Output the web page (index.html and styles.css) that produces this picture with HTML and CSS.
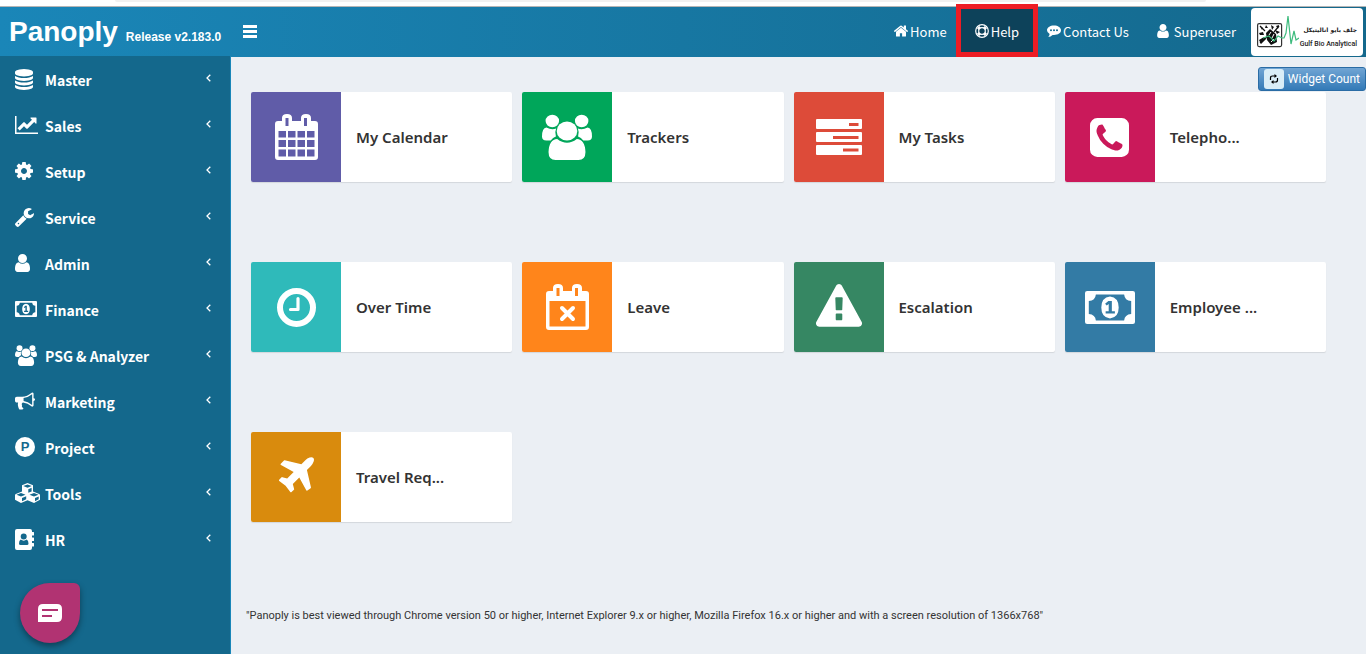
FILE: index.html
```html
<!DOCTYPE html>
<html lang="en">
<head>
  <meta charset="UTF-8">
  <meta name="viewport" content="width=device-width, initial-scale=1.0">
  <title>Panoply</title>
  <link rel="stylesheet" href="styles.css">
</head>
<body>
  <!-- Shared icons -->
  <svg class="sprite" aria-hidden="true">
    <symbol id="user" viewBox="256 128 1280 1536">
      <path d="M1536 1399q0 109-62.5 187t-150.5 78h-854q-88 0-150.5-78t-62.5-187q0-85 8.5-160.5t31.5-152 58.5-131 94-89 134.5-34.5q131 128 313 128t313-128q76 0 134.5 34.5t94 89 58.5 131 31.5 152 8.5 160.5zm-256-887q0 159-112.5 271.5t-271.5 112.5-271.5-112.5-112.5-271.5 112.5-271.5 271.5-112.5 271.5 112.5 112.5 271.5z"/>
    </symbol>
    <symbol id="users" viewBox="0 0 46 46" preserveAspectRatio="none">
      <circle cx="9.500" cy="7" r="6.200"/>
      <circle cx="36.500" cy="7" r="6.200"/>
      <path d="M4 13.500Q9 16.500 13 14.500Q11.500 18 12.800 22.500Q10 23.500 8 26.500H4Q0 26.500 0 22.500Q0 14 4 13.500zM42 13.500Q37 16.500 33 14.500Q34.500 18 33.200 22.500Q36 23.500 38 26.500H42Q46 26.500 46 22.500Q46 14 42 13.500z"/>
      <circle cx="23" cy="17" r="9.500"/>
      <path d="M14 25Q23 32.500 32 25Q39.500 25.500 40 38Q40 46 33.500 46H12.500Q6 46 6 38Q6.500 25.500 14 25z"/>
    </symbol>
    <symbol id="money" viewBox="0 0 46 33" preserveAspectRatio="none">
      <path fill-rule="evenodd" d="M2 0H44Q46 0 46 2V31Q46 33 44 33H2Q0 33 0 31V2Q0 0 2 0zM10 3.500Q9.500 9.500 3.500 10V23Q9.500 23.500 10 29.500H36Q36.500 23.500 42.500 23V10Q36.500 9.500 36 3.500zM23 5.500Q31 6.500 31 16.500Q31 26.500 23 27.500Q15 26.500 15 16.500Q15 6.500 23 5.500zM21.500 10L18.500 12.800L20 14.500L21.800 13V20.200H19V22.600H27.500V20.200H24.700V10z"/>
    </symbol>
    <symbol id="angle" viewBox="0 0 5 8">
      <path d="M4.300 .7L1 4L4.300 7.300" fill="none" stroke="currentColor" stroke-width="1.300"/>
    </symbol>
  </svg>

  <div class="window-edge"></div>

  <header class="header">
    <div class="brand">
      <span class="brand-name">Panoply</span>
      <span class="brand-release">Release v2.183.0</span>
    </div>
    <button class="menu-toggle" type="button" aria-label="Toggle menu">
      <span></span><span></span><span></span>
    </button>
    <nav class="top-nav">
      <a class="nav-link" href="#">
        <svg class="nav-icon" viewBox="90 250 1612 1290"><path d="M1472 992v480q0 26-19 45t-45 19h-384v-384h-256v384h-384q-26 0-45-19t-19-45v-480q0-1 .5-3t.5-3l575-474 575 474q1 2 1 6zm223-69l-62 74q-8 9-21 11h-3q-13 0-21-7l-692-577-692 577q-12 8-24 7-13-2-21-11l-62-74q-8-10-7-23.500t11-21.500l719-599q32-26 76-26t76 26l244 204v-195q0-14 9-23t23-9h192q14 0 23 9t9 23v408l219 182q10 8 11 21.500t-7 23.500z"/></svg>
        Home
      </a>
      <a class="nav-link active" href="#">
        <svg class="nav-icon" viewBox="0 0 14 14">
          <circle cx="7" cy="7" r="6.300" fill="none" stroke="currentColor" stroke-width="1.200"/>
          <circle cx="7" cy="7" r="3.300" fill="none" stroke="currentColor" stroke-width="1.200"/>
          <path d="M2 4.200L4.200 2L6 3.800L3.800 6zM12 4.200L9.800 2L8 3.800L10.200 6zM2 9.800L4.200 12L6 10.200L3.800 8zM12 9.800L9.800 12L8 10.200L10.200 8z"/>
        </svg>
        Help
      </a>
      <a class="nav-link" href="#">
        <svg class="nav-icon" viewBox="0 0 14 12">
          <path fill-rule="evenodd" d="M7 .5C11 .5 14 2.600 14 5.300S11 10 7 10Q6.300 10 5.600 9.900Q3.600 11.700 1.300 11.900Q2.500 10.700 2.600 9Q0 7.600 0 5.300C0 2.600 3 .5 7 .5zM3 5.300a1 1 0 1 0 2 0a1 1 0 1 0-2 0zM6 5.300a1 1 0 1 0 2 0a1 1 0 1 0-2 0zM9 5.300a1 1 0 1 0 2 0a1 1 0 1 0-2 0z"/>
        </svg>
        Contact Us
      </a>
      <a class="nav-link nav-user" href="#">
        <svg class="nav-icon"><use href="#user"/></svg>
        Superuser
      </a>
      <a class="company" href="#">
        <svg class="company-mark" viewBox="0 0 42 36">
          <rect x=".6" y="9.600" width="24" height="23" rx="1.500" fill="#fff" stroke="#333" stroke-width="1.200"/>
          <path d="M9 19L13 15L19 20L20 28L14 31L10 26zM3 12L6 14L5 16zM9 11L11 14L8 14zM14 11L17 13L15 16zM19 12L22 11L21 15zM2 19L6 18L7 21L3 21zM2 26L7 23L9 25L4 30zM18 16L23 18L20 20z" fill="#111"/>
          <path d="M3 12L8 17M22 12L17 18M3 29L11 22" stroke="#111" stroke-width="1.200"/>
          <path d="M12 21L14 18M15 24L17 20M14 28L17 25" stroke="#fff"/>
          <path d="M6 24L12 22L17 27L21 22L25 24H27L29 19L31 2L34 30L37 17L39 26L42 24" fill="none" stroke="#3dbb7d" stroke-width="1.200"/>
        </svg>
        <span class="company-name">
          <span class="company-ar" lang="ar" dir="rtl">جلف بايو اناليتيكل</span>
          <span class="company-en">Gulf Bio Analytical</span>
        </span>
      </a>
    </nav>
  </header>

  <div class="layout">
    <aside class="sidebar">
      <ul class="menu">
        <li><a class="menu-link" href="#">
          <span class="menu-icon"><svg width="18" height="21" viewBox="128 0 1536 1792"><path d="M896 768q237 0 443-43t325-127v170q0 69-103 128t-280 93.500-385 34.500-385-34.500-280-93.500-103-128v-170q119 84 325 127t443 43zm0 768q237 0 443-43t325-127v170q0 69-103 128t-280 93.500-385 34.500-385-34.500-280-93.500-103-128v-170q119 84 325 127t443 43zm0-384q237 0 443-43t325-127v170q0 69-103 128t-280 93.500-385 34.500-385-34.500-280-93.500-103-128v-170q119 84 325 127t443 43zm0-1152q208 0 385 34.500t280 93.500 103 128v128q0 69-103 128t-280 93.500-385 34.500-385-34.500-280-93.500-103-128v-128q0-69 103-128t280-93.500 385-34.500z"/></svg></span>
          <span>Master</span>
          <svg class="angle"><use href="#angle"/></svg>
        </a></li>
        <li><a class="menu-link" href="#">
          <span class="menu-icon"><svg width="23" height="18" viewBox="0 0 23 18"><path d="M0 0H1.500V16.500H23V18H0zM21.500 2V7.200Q21.300 8 20.600 7.400L19.200 6L12.500 12.700Q12 13 11.500 12.700L9 10.200L4.700 14.500L2.500 12.300L8.500 6.300Q9 6 9.500 6.300L12 8.800L17 3.800L15.600 2.400Q15.100 1.700 15.900 1.500H21Q21.500 1.500 21.500 2z"/></svg></span>
          <span>Sales</span>
          <svg class="angle"><use href="#angle"/></svg>
        </a></li>
        <li><a class="menu-link" href="#">
          <span class="menu-icon"><svg width="18" height="18" viewBox="128 128 1536 1536"><path d="M1152 896q0-106-75-181t-181-75-181 75-75 181 75 181 181 75 181-75 75-181zm512-109v222q0 12-8 23t-20 13l-185 28q-19 54-39 91 35 50 107 138 10 12 10 25t-9 23q-27 37-99 108t-94 71q-12 0-26-9l-138-108q-44 23-91 38-16 136-29 186-7 28-36 28h-222q-14 0-24.500-8.500t-11.500-21.500l-28-184q-49-16-90-37l-141 107q-10 9-25 9-14 0-25-11-126-114-165-168-7-10-7-23 0-12 8-23 15-21 51-66.500t54-70.500q-27-50-41-99l-183-27q-13-2-21-12.500t-8-23.500v-222q0-12 8-23t19-13l186-28q14-46 39-92-40-57-107-138-10-12-10-24 0-10 9-23 26-36 98.500-107.500t94.500-71.500q13 0 26 10l138 107q44-23 91-38 16-136 29-186 7-28 36-28h222q14 0 24.500 8.500t11.500 21.500l28 184q49 16 90 37l142-107q9-9 24-9 13 0 25 10 129 119 165 170 7 8 7 22 0 12-8 23-15 21-51 66.500t-54 70.500q26 50 41 98l183 28q13 2 21 12.500t8 23.500z"/></svg></span>
          <span>Setup</span>
          <svg class="angle"><use href="#angle"/></svg>
        </a></li>
        <li><a class="menu-link" href="#">
          <span class="menu-icon"><svg width="19" height="19" viewBox="84 128 1643 1643"><path d="M448 1472q0-26-19-45t-45-19-45 19-19 45 19 45 45 19 45-19 19-45zm644-420l-682 682q-37 37-90 37-52 0-91-37l-106-108q-38-36-38-90 0-53 38-91l681-681q39 98 114.500 173.500t173.500 114.500zm634-435q0 39-23 106-47 134-164.500 217.500t-258.500 83.500q-185 0-316.500-131.500t-131.500-316.500 131.500-316.500 316.500-131.500q58 0 121.500 16.500t107.500 46.500q16 11 16 28t-16 28l-293 169v224l193 107q5-3 79-48.500t135.500-81 70.500-35.500q15 0 23.500 10t8.500 25z"/></svg></span>
          <span>Service</span>
          <svg class="angle"><use href="#angle"/></svg>
        </a></li>
        <li><a class="menu-link" href="#">
          <span class="menu-icon"><svg width="15" height="18"><use href="#user"/></svg></span>
          <span>Admin</span>
          <svg class="angle"><use href="#angle"/></svg>
        </a></li>
        <li><a class="menu-link" href="#">
          <span class="menu-icon"><svg width="22" height="16"><use href="#money"/></svg></span>
          <span>Finance</span>
          <svg class="angle"><use href="#angle"/></svg>
        </a></li>
        <li><a class="menu-link" href="#">
          <span class="menu-icon"><svg width="22" height="21"><use href="#users"/></svg></span>
          <span>PSG &amp; Analyzer</span>
          <svg class="angle"><use href="#angle"/></svg>
        </a></li>
        <li><a class="menu-link" href="#">
          <span class="menu-icon"><svg width="20" height="18" viewBox="0 128 1792 1536"><path d="M1664 640q53 0 90.500 37.500t37.500 90.500-37.500 90.500-90.500 37.500v384q0 52-38 90t-90 38q-417-347-812-380-58 19-91 66t-31 100.500 40 92.500q-20 33-23 65.500t6 58 33.500 55 48 50 61.500 50.500q-29 58-111.500 83t-168.500 11.500-132-55.500q-7-23-29.500-87.500t-32-94.500-23-89-15-101 3.500-98.500 22-110.500h-122q-66 0-113-47t-47-113v-192q0-66 47-113t113-47h480q435 0 896-384 52 0 90 38t38 90v384zm-128 604v-954q-394 302-768 343v270q377 42 768 341z"/></svg></span>
          <span>Marketing</span>
          <svg class="angle"><use href="#angle"/></svg>
        </a></li>
        <li><a class="menu-link" href="#">
          <span class="menu-icon"><span class="badge-p">P</span></span>
          <span>Project</span>
          <svg class="angle"><use href="#angle"/></svg>
        </a></li>
        <li><a class="menu-link" href="#">
          <span class="menu-icon"><svg width="25" height="20" viewBox="0 0 25 20"><path fill-rule="evenodd" d="M12.500 0L18 2.200V8.400L24.200 11Q25 11.400 25 12.200V16.800L19 20L12.500 17.300L6 20L0 16.800V12.200Q0 11.400.8 11L7 8.400V2.200zM8.300 3L12.500 4.800L16.700 3L12.500 1.400zM13.300 6.200V9.800L16.600 8.400V4.800zM1.500 11.800L6 13.600L10.500 11.800L6 10zM7 15V18.200L11.200 16.200V13.200zM14.500 11.800L19 13.600L23.500 11.800L19 10zM20 15V18.200L23.700 16.200V13.400z"/></svg></span>
          <span>Tools</span>
          <svg class="angle"><use href="#angle"/></svg>
        </a></li>
        <li><a class="menu-link" href="#">
          <span class="menu-icon"><svg width="19" height="21" viewBox="0 0 19 21"><path fill-rule="evenodd" d="M2 0H15Q17 0 17 2V3H18.500Q19 3 19 3.500V6Q19 6.500 18.500 6.500H17V8.500H18.500Q19 8.500 19 9V11.500Q19 12 18.500 12H17V14H18.500Q19 14 19 14.500V17Q19 17.500 18.500 17.500H17V19Q17 21 15 21H2Q0 21 0 19V2Q0 0 2 0zM5.700 7.500a3 3 0 1 0 6 0a3 3 0 1 0-6 0zM5.700 10.500Q4 11.500 4 14.500Q4 16 5.500 16H12Q13.500 16 13.500 14.500Q13.500 11.500 11.700 10.500Q8.700 12.800 5.700 10.500z"/></svg></span>
          <span>HR</span>
          <svg class="angle"><use href="#angle"/></svg>
        </a></li>
      </ul>
    </aside>

    <main class="content">
      <button class="widget-count" type="button">
        <span class="refresh"><svg width="10" height="10" viewBox="0 0 10 10"><path d="M1.500 6V4Q1.500 2 3.500 2H6.500M8.500 4V6Q8.500 8 6.500 8H3.500" fill="none" stroke="#000" stroke-width="1.200"/><path d="M5.500 0L8 2L5.500 4zM4.500 6L2 8L4.500 10z"/></svg></span>
        Widget Count
      </button>

      <div class="tiles">
        <a class="tile" href="#">
          <span class="tile-icon purple"><svg width="43" height="46" viewBox="0 0 43 46"><path fill-rule="evenodd" d="M3 7H7V4Q7 0 12 0T17 4V7H26V4Q26 0 31 0T36 4V7H40Q43 7 43 10V43Q43 46 40 46H3Q0 46 0 43V10Q0 7 3 7zM10.500 4V12H13.500V4zM29 4V12H32V4zM3.500 17V23.500H11V17zM13 17V23.500H20.500V17zM22.500 17V23.500H30V17zM32 17V23.500H39.500V17zM3.500 26V33H11V26zM13 26V33H20.500V26zM22.500 26V33H30V26zM32 26V33H39.500V26zM3.500 35.500V42.500H11V35.500zM13 35.500V42.500H20.500V35.500zM22.500 35.500V42.500H30V35.500zM32 35.500V42.500H39.500V35.500z"/></svg></span>
          <span class="tile-title">My Calendar</span>
        </a>
        <a class="tile" href="#">
          <span class="tile-icon green"><svg width="50" height="46"><use href="#users"/></svg></span>
          <span class="tile-title">Trackers</span>
        </a>
        <a class="tile" href="#">
          <span class="tile-icon red"><svg width="46" height="36" viewBox="0 0 46 36"><path fill-rule="evenodd" d="M1 0H45Q46 0 46 1V9Q46 10 45 10H1Q0 10 0 9V1Q0 0 1 0zM33 4V7H42.500V4zM1 13H45Q46 13 46 14V22Q46 23 45 23H1Q0 23 0 22V14Q0 13 1 13zM17 17V20H42.500V17zM1 26H45Q46 26 46 27V35Q46 36 45 36H1Q0 36 0 35V27Q0 26 1 26zM27 29.500V32.500H42.500V29.500z"/></svg></span>
          <span class="tile-title">My Tasks</span>
        </a>
        <a class="tile" href="#">
          <span class="tile-icon pink"><svg width="39" height="39" viewBox="128 128 1536 1536"><path d="M1408 1193q0-11-2-16t-18-16.500-40.500-25-47.500-26.500-45.500-25-28.500-15q-5-3-19-13t-25-15-21-5q-15 0-36.500 20.500t-39.500 45-38.500 45-33.500 20.500q-7 0-16.500-3.500t-15.500-6.500-17-9.500-14-8.500q-99-55-170-126.500t-127-170.500q-2-3-8.500-14t-9.500-17-6.500-15.500-3.500-16.500q0-13 20.500-33.500t45-38.500 45-39.500 20.500-36.500q0-10-5-21t-15-25-13-19q-3-6-15-28.500t-25-45.500-26.500-47.500-25-40.500-16.500-18-16-2q-48 0-101 22-46 21-80 94.500t-34 130.500q0 16 2.500 34t5 30.500 9 33 10 29.500 12.500 33 11 30q60 164 216.500 320.500t320.500 216.500q6 2 30 11t33 12.500 29.500 10 33 9 30.500 5 34 2.500q57 0 130.500-34t94.500-80q22-53 22-101zm256-777v960q0 119-84.500 203.500t-203.500 84.500h-960q-119 0-203.500-84.500t-84.500-203.500v-960q0-119 84.500-203.500t203.500-84.500h960q119 0 203.500 84.500t84.500 203.500z"/></svg></span>
          <span class="tile-title">Telepho...</span>
        </a>
        <a class="tile" href="#">
          <span class="tile-icon teal"><svg width="39" height="39" viewBox="0 0 39 39"><circle cx="19.500" cy="19.500" r="16.500" fill="none" stroke="currentColor" stroke-width="6"/><path d="M21 10.500V21.500H13.500" fill="none" stroke="currentColor" stroke-width="3.200" stroke-linecap="round" stroke-linejoin="round"/></svg></span>
          <span class="tile-title">Over Time</span>
        </a>
        <a class="tile" href="#">
          <span class="tile-icon orange"><svg width="43" height="46" viewBox="0 0 43 46"><path fill-rule="evenodd" d="M3 7H7V4Q7 0 12 0T17 4V7H26V4Q26 0 31 0T36 4V7H40Q43 7 43 10V43Q43 46 40 46H3Q0 46 0 43V10Q0 7 3 7zM10.500 4V12H13.500V4zM29 4V12H32V4zM3.500 17V42.500H39.500V17z"/><path d="M16 24L27 35M27 24L16 35" stroke="currentColor" stroke-width="4" stroke-linecap="round"/></svg></span>
          <span class="tile-title">Leave</span>
        </a>
        <a class="tile" href="#">
          <span class="tile-icon forest"><svg width="46" height="46" viewBox="0 0 1792 1792"><path d="M1024 1375v-190q0-14-9.500-23.500t-22.500-9.500h-192q-13 0-22.500 9.500t-9.500 23.500v190q0 14 9.500 23.500t22.500 9.500h192q13 0 22.500-9.500t9.500-23.500zm-2-374l18-459q0-12-10-19-13-11-24-11h-220q-11 0-24 11-10 7-10 21l17 457q0 10 10 16.500t24 6.500h185q14 0 23.500-6.500t10.500-16.500zm-14-934l768 1408q35 63-2 126-17 29-46.500 46t-63.500 17h-1536q-34 0-63.500-17t-46.500-46q-37-63-2-126l768-1408q17-31 47-49t65-18 65 18 47 49z"/></svg></span>
          <span class="tile-title">Escalation</span>
        </a>
        <a class="tile" href="#">
          <span class="tile-icon blue"><svg width="50" height="33"><use href="#money"/></svg></span>
          <span class="tile-title">Employee ...</span>
        </a>
        <a class="tile" href="#">
          <span class="tile-icon amber"><svg width="37" height="41" viewBox="154 124 1480 1640"><path d="M1568 160q44 52 12 148t-108 172l-161 161 160 696q5 19-12 33l-128 96q-7 6-19 6-4 0-7-1-15-3-21-16l-279-508-259 259 53 194q5 17-8 31l-96 96q-9 9-23 9h-2q-15-2-24-13l-189-252-252-189q-11-7-13-23-1-13 9-25l96-97q9-9 23-9 6 0 8 1l194 53 259-259-508-279q-14-8-17-24-2-16 9-27l128-128q14-13 30-8l665 159 160-160q76-76 172-108t148 12z"/></svg></span>
          <span class="tile-title">Travel Req...</span>
        </a>
      </div>

      <p class="notice">"Panoply is best viewed through Chrome version 50 or higher, Internet Explorer 9.x or higher, Mozilla Firefox 16.x or higher and with a screen resolution of 1366x768"</p>
    </main>
  </div>

  <button class="chat" type="button" aria-label="Chat">
    <svg width="24" height="18" viewBox="0 0 24 18"><path fill-rule="evenodd" d="M5 0H19Q24 0 24 5V13Q24 18 19 18H0V5Q0 0 5 0zM4 5V7H20V5zM4 11V13H14V11z"/></svg>
  </button>
</body>
</html>
```
FILE: styles.css
```css
* {
  margin: 0;
  padding: 0;
  box-sizing: border-box;
}

body {
  display: flex;
  flex-direction: column;
  min-height: 100vh;
  background: #ebeff4;
  color: #333;
  font-family: "Noto Sans", "Open Sans", sans-serif;
  font-size: 14px;
}

a {
  color: inherit;
  text-decoration: none;
}

button {
  border: 0;
  font: inherit;
  color: inherit;
  cursor: pointer;
}

svg {
  display: block;
  fill: currentColor;
}

.sprite {
  position: absolute;
  width: 0;
  height: 0;
}

.window-edge {
  height: 7px;
  background: #fff;
  border-bottom: 1px solid #b5b5b5;
}

.window-edge::before {
  content: "";
  display: block;
  height: 2px;
  margin: 0 160px 0 115px;
  background: #f1f1f1;
  border-radius: 0 0 4px 4px;
}

/* Header */
.header {
  display: flex;
  align-items: center;
  height: 50px;
  background: linear-gradient(90deg, #1a86b8, #14688c);
  color: #fff;
}

.brand {
  width: 231px;
  padding-left: 9px;
  font-family: "Liberation Sans", Arial, sans-serif;
  font-weight: bold;
  white-space: nowrap;
}

.brand-name {
  margin-right: 4px;
  font-size: 28px;
}

.brand-release {
  font-size: 12px;
}

.menu-toggle {
  display: flex;
  flex-direction: column;
  gap: 2px;
  margin-left: 12px;
  padding-bottom: 2px;
  background: none;
}

.menu-toggle span {
  width: 14px;
  height: 3px;
  background: #fff;
}

.top-nav {
  display: flex;
  align-items: center;
  align-self: stretch;
  margin-left: auto;
  padding-right: 3px;
  font-family: "Noto Sans CJK JP", sans-serif;
  font-size: 13px;
}

.nav-link {
  position: relative;
  display: flex;
  align-items: center;
  gap: 2px;
  height: 50px;
  padding: 0 14px 2px;
}

.nav-icon {
  width: 14px;
  height: 14px;
}

.nav-user {
  gap: 5px;
  padding-right: 15px;
}

.nav-user .nav-icon {
  width: 12px;
}

.active {
  background: #0d425a;
}

/* Red marker round the current entry */
.active::after {
  content: "";
  position: absolute;
  top: -3px;
  bottom: 0;
  left: -5px;
  right: -5px;
  border: 5px solid #ed1c24;
}

.company {
  display: flex;
  align-items: center;
  justify-content: space-between;
  width: 112px;
  height: 48px;
  padding: 0 6px;
  background: #fff;
  border-radius: 4px;
  color: #222;
}

.company-mark {
  flex: none;
  width: 42px;
  height: 36px;
}

.company-name {
  display: flex;
  flex-direction: column;
  align-items: flex-end;
  padding-top: 10px;
  white-space: nowrap;
}

.company-ar {
  font: bold 6px/14px "DejaVu Sans", sans-serif;
}

.company-en {
  font: 500 7px/14px Roboto, sans-serif;
}

/* Sidebar */
.layout {
  display: flex;
  flex: 1;
}

.sidebar {
  flex: none;
  width: 231px;
  margin-top: -1px;
  background: #14688c;
  border-right: 1px solid #1a86b8;
  color: #fff;
}

.menu {
  list-style: none;
}

.menu-link {
  display: flex;
  align-items: center;
  height: 46px;
  padding: 2px 19px 0 15px;
  font-family: "Noto Sans CJK JP", sans-serif;
  font-size: 14px;
  font-weight: bold;
}

.menu-icon {
  width: 30px;
  padding-bottom: 2px;
}

.badge-p {
  display: block;
  width: 20px;
  height: 20px;
  border-radius: 50%;
  background: #fff;
  color: #14688c;
  font: bold 13px/20px "Liberation Sans", sans-serif;
  text-align: center;
}

.angle {
  width: 5px;
  height: 8px;
  margin-left: auto;
  margin-bottom: 4px;
}

/* Dashboard */
.content {
  position: relative;
  flex: 1;
  padding: 35px 40px 30px 20px;
}

.widget-count {
  position: absolute;
  top: 10px;
  right: 0;
  display: flex;
  align-items: center;
  gap: 4px;
  height: 24px;
  padding: 0 5px;
  border: 1px solid #2a6ca5;
  border-radius: 3px;
  background: linear-gradient(#71a5d4, #337ab7);
  color: #fff;
  font-family: Roboto, sans-serif;
  font-size: 12px;
  line-height: 16px;
  white-space: nowrap;
}

.refresh {
  display: flex;
  align-items: center;
  justify-content: center;
  width: 20px;
  height: 20px;
  border-radius: 3px;
  background: #d9edf7;
  color: #000;
}

.tiles {
  display: grid;
  grid-template-columns: repeat(4, 1fr);
  gap: 80px 10px;
}

.tile {
  display: flex;
  align-items: center;
  height: 90px;
  overflow: hidden;
  background: #fff;
  border-radius: 2px;
  box-shadow: 0 1px 1px rgba(0, 0, 0, 0.1);
}

.tile-icon {
  display: flex;
  align-items: center;
  justify-content: center;
  width: 90px;
  height: 90px;
  color: #fff;
}

.purple { background: #605ca8; }
.green { background: #00a65a; }
.red { background: #dd4b39; }
.pink { background: #ca195a; }
.teal { background: #2fbaba; }
.orange { background: #ff851b; }
.forest { background: #368763; }
.blue { background: #337ba5; }
.amber { background: #d98b0d; }

.tile-title {
  padding-left: 15px;
  font-size: 15px;
  font-weight: 600;
}

.notice {
  margin-top: 86px;
  margin-left: -5px;
  font-family: Roboto, sans-serif;
  font-size: 11px;
  line-height: 16px;
}

/* Chat bubble */
.chat {
  position: fixed;
  bottom: 11px;
  left: 20px;
  display: flex;
  align-items: center;
  justify-content: center;
  width: 60px;
  height: 60px;
  border-radius: 30px 6px 30px 30px;
  background: #b13372;
  color: #fff;
  box-shadow: 0 3px 6px rgba(0, 0, 0, 0.4);
}
```
